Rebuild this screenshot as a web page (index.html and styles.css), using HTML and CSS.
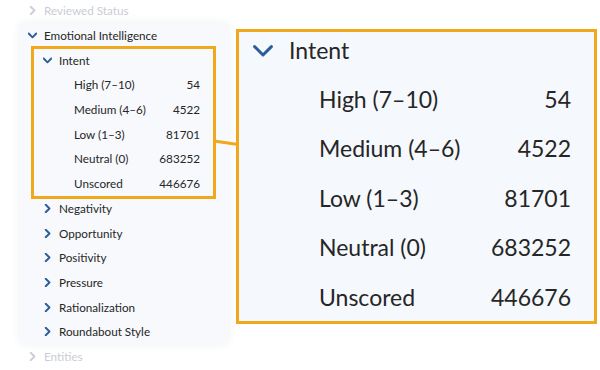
FILE: index.html
```html
<!DOCTYPE html>
<html lang="en">
<head>
    <meta charset="UTF-8">
    <meta name="viewport" content="width=device-width, initial-scale=1.0">
    <title>Emotional Intelligence - Intent</title>
    <link rel="stylesheet" href="styles.css">
</head>
<body>
    <div class="wrap">

        <!-- 왼쪽 필터 트리 -->
        <div class="tree">
            <div class="row muted">
                <span class="ico"><svg viewBox="0 0 10 10"><polyline points="3,0.8 7.2,5 3,9.2"/></svg></span>
                <span class="lbl">Reviewed Status</span>
            </div>

            <div class="panel">
                <div class="row">
                    <span class="ico"><svg viewBox="0 0 10 10"><polyline points="0.8,2.8 5,7 9.2,2.8"/></svg></span>
                    <span class="lbl">Emotional Intelligence</span>
                </div>

                <!-- 강조 그룹 -->
                <div class="group hl">
                    <div class="row lv1">
                        <span class="ico"><svg viewBox="0 0 10 10"><polyline points="0.8,2.8 5,7 9.2,2.8"/></svg></span>
                        <span class="lbl">Intent</span>
                    </div>
                    <div class="row lv2"><span class="lbl">High (7–10)</span><span class="num">54</span></div>
                    <div class="row lv2"><span class="lbl">Medium (4–6)</span><span class="num">4522</span></div>
                    <div class="row lv2"><span class="lbl">Low (1–3)</span><span class="num">81701</span></div>
                    <div class="row lv2"><span class="lbl">Neutral (0)</span><span class="num">683252</span></div>
                    <div class="row lv2"><span class="lbl">Unscored</span><span class="num">446676</span></div>
                </div>

                <div class="row lv1">
                    <span class="ico"><svg viewBox="0 0 10 10"><polyline points="3,0.8 7.2,5 3,9.2"/></svg></span>
                    <span class="lbl">Negativity</span>
                </div>
                <div class="row lv1">
                    <span class="ico"><svg viewBox="0 0 10 10"><polyline points="3,0.8 7.2,5 3,9.2"/></svg></span>
                    <span class="lbl">Opportunity</span>
                </div>
                <div class="row lv1">
                    <span class="ico"><svg viewBox="0 0 10 10"><polyline points="3,0.8 7.2,5 3,9.2"/></svg></span>
                    <span class="lbl">Positivity</span>
                </div>
                <div class="row lv1">
                    <span class="ico"><svg viewBox="0 0 10 10"><polyline points="3,0.8 7.2,5 3,9.2"/></svg></span>
                    <span class="lbl">Pressure</span>
                </div>
                <div class="row lv1">
                    <span class="ico"><svg viewBox="0 0 10 10"><polyline points="3,0.8 7.2,5 3,9.2"/></svg></span>
                    <span class="lbl">Rationalization</span>
                </div>
                <div class="row lv1">
                    <span class="ico"><svg viewBox="0 0 10 10"><polyline points="3,0.8 7.2,5 3,9.2"/></svg></span>
                    <span class="lbl">Roundabout Style</span>
                </div>
            </div>

            <div class="row muted">
                <span class="ico"><svg viewBox="0 0 10 10"><polyline points="3,0.8 7.2,5 3,9.2"/></svg></span>
                <span class="lbl">Entities</span>
            </div>
        </div>

        <!-- 확대 박스 -->
        <div class="zoomBx">
            <div class="zoomIn">
                <div class="zrow zhead">
                    <span class="zico"><svg viewBox="0 0 10 10"><polyline points="0.8,2.8 5,7 9.2,2.8"/></svg></span>
                    <span class="lbl">Intent</span>
                </div>
                <div class="zrow"><span class="lbl">High (7–10)</span><span class="num">54</span></div>
                <div class="zrow"><span class="lbl">Medium (4–6)</span><span class="num">4522</span></div>
                <div class="zrow"><span class="lbl">Low (1–3)</span><span class="num">81701</span></div>
                <div class="zrow"><span class="lbl">Neutral (0)</span><span class="num">683252</span></div>
                <div class="zrow"><span class="lbl">Unscored</span><span class="num">446676</span></div>
            </div>
        </div>
    </div>

    <!-- 연결선 -->
    <svg class="link" viewBox="0 0 600 370"><line x1="214" y1="141" x2="238" y2="144.5"/></svg>
</body>
</html>
```

FILE: styles.css
```css
/* 초기화 */
html, body{
    margin: 0;
    padding: 0;
}
body{
    width: 600px;
    height: 370px;
    overflow: hidden;
    position: relative;
    background: #fff;
    color: #262626;
    font-family: Lato, "Open Sans", sans-serif;
}

.wrap{
    display: flex;
    align-items: flex-start;
}

/* 트리 */
.tree{
    width: 236px;
    margin-top: -2px;
    font-size: 11.7px;
}
.row{
    display: flex;
    align-items: center;
    height: 24.7px;
    padding: 0 28px 0 28px;
}
.ico{
    display: flex;
    align-items: center;
    width: 16px;
    flex: none;
}
.ico svg{
    width: 9px;
    height: 9px;
    margin-top: 1px;
}
.ico svg polyline,
.zico svg polyline{
    fill: none;
    stroke: #2a5d9c;
    stroke-width: 2.1;
    stroke-linecap: round;
    stroke-linejoin: round;
}
.num{
    margin-left: auto;
}

/* 흐린 항목 */
.muted{
    color: #c9cdd3;
}
.muted .ico svg polyline{
    stroke: #c8d0de;
}

/* 패널 */
.panel{
    margin-left: 20px;
    width: 208px;
    background: #f7f9fc;
    border-radius: 4px;
    box-shadow: 0 0 10px rgba(40, 60, 90, .08);
}
.panel .row{
    padding-left: 8px;
}
.panel .lv1{
    padding-left: 23px;
}
.panel .lv2{
    padding-left: 54px;
}

/* 강조 그룹 */
.group{
    position: relative;
}
.hl::after{
    content: '';
    position: absolute;
    top: -1px;
    bottom: -3px;
    left: 11px;
    right: 12px;
    border: 3px solid #f0a81c;
    pointer-events: none;
}

/* 확대 박스 */
.zoomBx{
    width: 355px;
    margin-top: 29px;
    border: 3px solid #f0a81c;
    background: #f5f8fc;
    font-size: 23px;
}
.zoomIn{
    margin-top: -7px;
}
.zrow{
    display: flex;
    align-items: center;
    height: 49.4px;
    padding: 0 23px 0 80px;
}
.zhead{
    padding-left: 14px;
}
.zico{
    display: flex;
    align-items: center;
    width: 36px;
    flex: none;
}
.zico svg{
    width: 20px;
    height: 20px;
    margin-top: 3px;
}
.zico svg polyline{
    stroke-width: 1.5;
}

/* 연결선 */
.link{
    position: absolute;
    top: 0;
    left: 0;
    width: 600px;
    height: 370px;
    pointer-events: none;
}
.link line{
    stroke: #f0a81c;
    stroke-width: 3;
}
```
